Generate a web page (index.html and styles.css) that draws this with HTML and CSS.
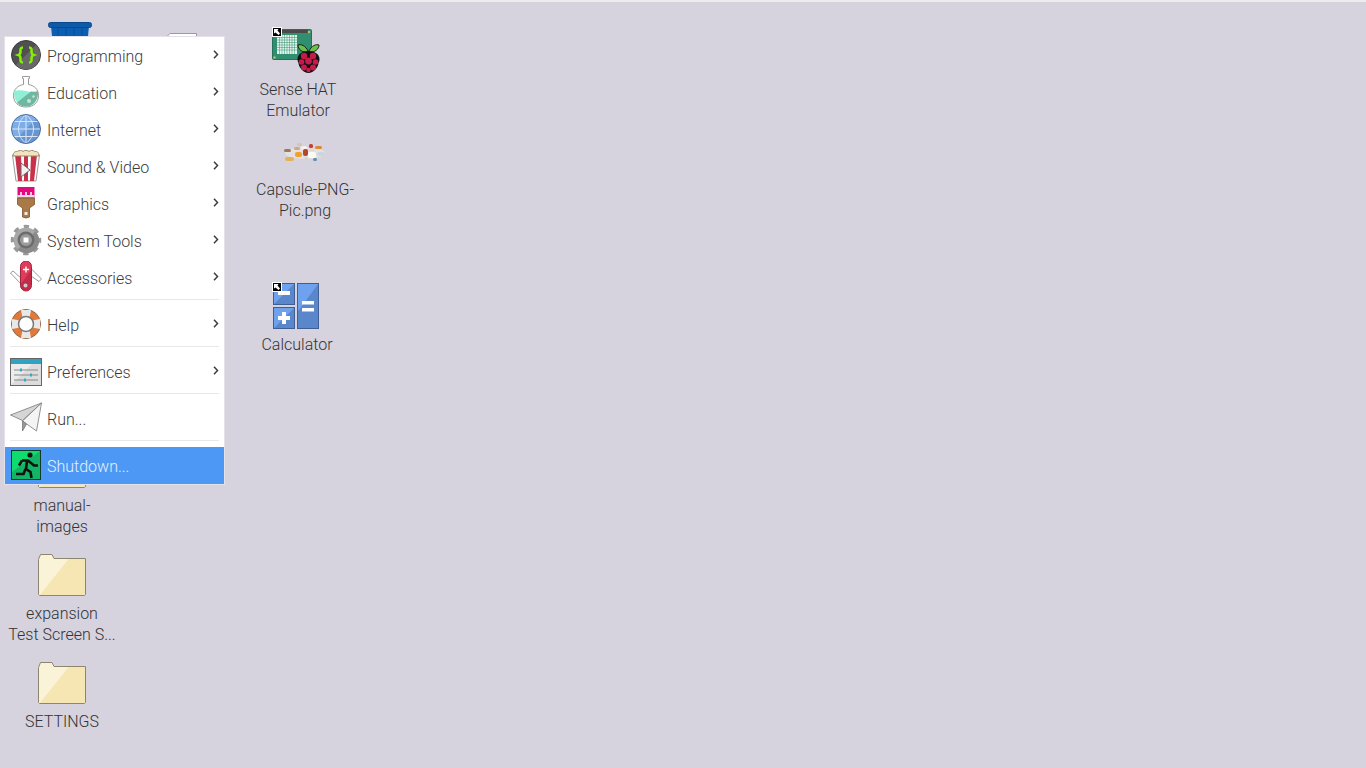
FILE: index.html
```html
<!DOCTYPE html>
<html lang="en">
<head>
    <meta charset="UTF-8">
    <meta name="viewport" content="width=device-width, initial-scale=1.0">
    <title>Desktop</title>
    <link rel="stylesheet" href="styles.css">
</head>
<body>
    <svg class="defs" width="0" height="0">
        <defs>
            <symbol id="folder" viewBox="0 0 48 42">
                <path d="M.5 41V5.5L2.5.5H14l2 4h31.500V40l-1 1.500H1.500Z" fill="#f5e6b4"/>
                <path d="M.5 41V5.500L2.500.5H14l2 4h15L1.500 41.500Z" fill="#fbf3d8"/>
                <path d="M.5 40.500V5.500L2.500.5H14l2 4h31.500v36l-1 1H1.500Z" fill="none" stroke="#8c8570"/>
            </symbol>
            <symbol id="shortcut" viewBox="0 0 10 10">
                <rect width="10" height="10" fill="#fff"/>
                <rect x="1" y="1" width="8" height="8" fill="#000"/>
                <path d="M2 2H6.500L5.500 3.500 8 6.500 6.500 8 3.500 5.500 2 6.500Z" fill="#fff"/>
            </symbol>
            <symbol id="chevron" viewBox="0 0 6 9">
                <path d="M1 .8 4.500 4.500 1 8.200" fill="none" stroke="#3c3c3c" stroke-width="1.500"/>
            </symbol>
        </defs>
    </svg>

    <div class="top-strip"></div>

    <main class="desktop">
        <!-- things half hidden behind the menu -->
        <svg class="desk-glyph trash" width="44" height="24" viewBox="0 0 44 24">
            <path d="M3 4h38l-2 20H5Z" fill="#0a5fb4"/>
            <path d="M10 6v18M18 6v18M26 6v18M34 6v18" stroke="#0b4f96"/>
            <rect x=".5" y=".5" width="43" height="5" rx="2" fill="#0f5aa6" stroke="#0a4a8c"/>
        </svg>
        <svg class="desk-glyph file" width="30" height="12" viewBox="0 0 30 12">
            <path d="M.5 12V3L3 .5h26.500V12" fill="#fff" stroke="#9a9a9a"/>
        </svg>
        <svg class="desk-glyph manual-folder" width="48" height="42"><use href="#folder"/></svg>

        <div class="desk-item manual-label"><span>manual-<br>images</span></div>

        <div class="desk-item sense">
            <svg class="desk-art" width="62" height="50" viewBox="0 0 62 50">
                <rect x="12.500" y="3.500" width="39" height="30" rx="1" fill="#2f8f6f" stroke="#25705a"/>
                <rect x="22" y="4" width="26" height="3" fill="#4a4a4a"/>
                <rect x="17" y="9" width="20" height="19" fill="#e4f3ec"/>
                <path d="M19.500 9v19M22 9v19M24.500 9v19M27 9v19M29.500 9v19M32 9v19M34.500 9v19M17 11.500h20M17 14h20M17 16.500h20M17 19h20M17 21.500h20M17 24h20" stroke="#2f8f6f" stroke-width=".5"/>
                <circle cx="14.500" cy="31.500" r="1.300" fill="#c9b36a"/>
                <circle cx="49" cy="6" r="1.300" fill="#c9b36a"/>
                <path d="M48.500 26c-3-7-8-8-10.500-7 0 4 4 8 10.500 7 6.500 1 10.500-3 10.500-7-2.500-1-7.500 0-10.500 7Z" fill="#6cc04a" stroke="#111" stroke-width=".9"/>
                <path d="M48.500 25c-6 0-11 3-11 8 0 2 .5 3 1 4 0 4 5 10 10 10s10-6 10-10c.5-1 1-2 1-4 0-5-5-8-11-8Z" fill="#111"/>
                <g fill="#c51a4a">
                    <circle cx="44" cy="30" r="3.200"/>
                    <circle cx="53" cy="30" r="3.200"/>
                    <circle cx="48.500" cy="35" r="3.400"/>
                    <circle cx="41.500" cy="36" r="2.800"/>
                    <circle cx="55.500" cy="36" r="2.800"/>
                    <circle cx="44" cy="41.500" r="3"/>
                    <circle cx="53" cy="41.500" r="3"/>
                    <circle cx="48.500" cy="44" r="2.200"/>
                </g>
                <use href="#shortcut" x="12" y="1" width="10" height="10"/>
            </svg>
            <span>Sense HAT<br>Emulator</span>
        </div>

        <div class="desk-item capsule">
            <svg class="desk-art" width="44" height="20" viewBox="0 0 44 20">
                <ellipse cx="22" cy="11" rx="20" ry="6" fill="#ebe6e2" opacity=".7"/>
                <rect x="1" y="7" width="7" height="3" rx="1.500" fill="#a0775a"/>
                <rect x="2" y="15" width="9" height="4" rx="2" fill="#e2b45a"/>
                <rect x="14" y="1" width="5" height="3" rx="1.500" fill="#d8c5a8"/>
                <rect x="11" y="5" width="6" height="3" rx="1.500" fill="#c9a98a"/>
                <rect x="12" y="10" width="7" height="5" rx="2" fill="#f0a030"/>
                <rect x="18" y="4" width="6" height="4" rx="2" fill="#f5f1ea"/>
                <rect x="20" y="7" width="5" height="7" rx="2" fill="#b5452e"/>
                <rect x="25" y="10" width="8" height="6" rx="2" fill="#fbfbf6"/>
                <rect x="26" y="2" width="4" height="4" rx="1.500" fill="#c33f33"/>
                <rect x="26" y="6" width="6" height="3" rx="1.500" fill="#e8d6c8"/>
                <rect x="32" y="4" width="7" height="3" rx="1.500" fill="#d9893b"/>
                <rect x="34" y="10" width="8" height="4" rx="2" fill="#c8d8d8"/>
                <rect x="30" y="16" width="4" height="3" rx="1.500" fill="#5d8fb0"/>
                <rect x="21" y="15" width="4" height="3" rx="1.500" fill="#d3d6d0"/>
            </svg>
            <span>Capsule-PNG-<br>Pic.png</span>
        </div>

        <div class="desk-item calc">
            <svg class="desk-art" width="48" height="48" viewBox="0 0 48 48">
                <rect x="1.500" y="1.500" width="21" height="21" fill="#5a86cc"/>
                <path d="M1.500 22.500v-21h21Z" fill="#6fa2ee"/>
                <rect x="1.500" y="1.500" width="21" height="21" fill="none" stroke="#3f5f94"/>
                <rect x="1.500" y="25.500" width="21" height="21" fill="#5a86cc"/>
                <path d="M1.500 46.500v-21h21Z" fill="#6fa2ee"/>
                <rect x="1.500" y="25.500" width="21" height="21" fill="none" stroke="#3f5f94"/>
                <rect x="25.500" y="1.500" width="21" height="45" fill="#5a86cc"/>
                <path d="M25.500 30V1.500h21Z" fill="#6fa2ee"/>
                <rect x="25.500" y="1.500" width="21" height="45" fill="none" stroke="#3f5f94"/>
                <rect x="6" y="9" width="12" height="4" fill="#fff"/>
                <rect x="6" y="34" width="12" height="4" fill="#fff"/>
                <rect x="10" y="30" width="4" height="12" fill="#fff"/>
                <rect x="30" y="19" width="12" height="3.500" fill="#fff"/>
                <rect x="30" y="26" width="12" height="3.500" fill="#fff"/>
                <use href="#shortcut" x="0" y="0" width="10" height="10"/>
            </svg>
            <span>Calculator</span>
        </div>

        <div class="desk-item expansion">
            <svg class="desk-art" width="48" height="42"><use href="#folder"/></svg>
            <span>expansion<br>Test Screen S...</span>
        </div>

        <div class="desk-item settings">
            <svg class="desk-art" width="48" height="42"><use href="#folder"/></svg>
            <span>SETTINGS</span>
        </div>
    </main>

    <nav class="menu">
        <div class="menu-item">
            <svg class="menu-icon" viewBox="0 0 32 32">
                <circle cx="16" cy="16" r="14.500" fill="#505050" stroke="#3a3a3a"/>
                <path d="M6 26 26 6A14.500 14.500 0 0 1 16 30.500 14 14 0 0 1 6 26Z" fill="#686868"/>
                <path d="M13 8.500c-3 0-2.500 2-2.500 4 0 2-.5 3-2 3.500 1.500.5 2 1.500 2 3.500s-.5 4 2.500 4M19 8.500c3 0 2.500 2 2.500 4 0 2 .5 3 2 3.500-1.500.5-2 1.500-2 3.500s.5 4-2.500 4" fill="none" stroke="#84f000" stroke-width="2.500"/>
            </svg>
            <span class="menu-label">Programming</span>
            <svg class="chevron"><use href="#chevron"/></svg>
        </div>
        <div class="menu-item">
            <svg class="menu-icon" viewBox="0 0 32 32">
                <path d="M12.500 .5h7v2h-1v6c6 1 10 5 10 11 0 7-5 11.500-12.500 11.500S3.500 26.500 3.500 19.500c0-6 4-10 10-11v-6h-1Z" fill="#fff" stroke="#9a9a9a"/>
                <path d="M4 15c8-3 16 3 24 0 .8 8-4 15.500-12 15.500S3.200 23 4 15Z" fill="#8ff0d6"/>
                <path d="M28 15c.8 8-4 15.500-12 15.500-4 0-7-1.500-9-4L21 15.500c2.500.5 5 .5 7-.5Z" fill="#6fb7a0"/>
                <circle cx="19" cy="25" r="2" fill="#bfe6da"/>
                <circle cx="23.500" cy="20.500" r="1.300" fill="#bfe6da"/>
            </svg>
            <span class="menu-label">Education</span>
            <svg class="chevron"><use href="#chevron"/></svg>
        </div>
        <div class="menu-item">
            <svg class="menu-icon" viewBox="0 0 32 32">
                <circle cx="16" cy="16" r="14.500" fill="#7eaeea"/>
                <path d="M6 26 26 6A14.500 14.500 0 0 1 16 30.500 14 14 0 0 1 6 26Z" fill="#6795d2"/>
                <path d="M1.500 16h29M16 1.500v29M4 8.500h24M4 23.500h24M16 1.500c-10 8-10 21 0 29M16 1.500c10 8 10 21 0 29" fill="none" stroke="#d7e6f7"/>
                <circle cx="16" cy="16" r="14.500" fill="none" stroke="#4e6f9c"/>
            </svg>
            <span class="menu-label">Internet</span>
            <svg class="chevron"><use href="#chevron"/></svg>
        </div>
        <div class="menu-item">
            <svg class="menu-icon" viewBox="0 0 32 32">
                <path d="M2.500 5 6 31h20L29.500 5Z" fill="#fff" stroke="#9a9a9a"/>
                <path d="M5 5 8 31h4L11 5ZM14 5 14 31h4V5ZM21 5 20 31h4L27 5Z" fill="#c9304a"/>
                <path d="M3 6c0-4 3-5 4.500-4.500C9 0 12 0 13 1.500 14.500 0 17.500 0 19 1.500 20.500 0 23 0 24.500 1.500 26.500 1 29 2 29 6Z" fill="#f3e3c0" stroke="#9a8a66"/>
                <path d="M11 13v14l9-7Z" fill="#f2f2f2" stroke="#666"/>
            </svg>
            <span class="menu-label">Sound &amp; Video</span>
            <svg class="chevron"><use href="#chevron"/></svg>
        </div>
        <div class="menu-item">
            <svg class="menu-icon" viewBox="0 0 32 32">
                <rect x="7.500" y="0" width="17" height="11" fill="#e5097f"/>
                <path d="M11 8V5M16 8V5M21 8V5" stroke="#fff" stroke-width="1.500"/>
                <rect x="7.500" y="8" width="17" height="2.500" fill="#f3d9e5"/>
                <path d="M7.500 11h17v6.500l-5 3.500v9q-3.500 2-7 0v-9l-5-3.500Z" fill="#a97a48" stroke="#7a5630" stroke-width=".8"/>
                <rect x="14.500" y="25" width="3" height="3" fill="#eee"/>
            </svg>
            <span class="menu-label">Graphics</span>
            <svg class="chevron"><use href="#chevron"/></svg>
        </div>
        <div class="menu-item">
            <svg class="menu-icon" viewBox="0 0 32 32">
                <circle cx="16" cy="16" r="13" fill="none" stroke="#999" stroke-width="4.500" stroke-dasharray="5.100 5.110" stroke-dashoffset="2.550"/>
                <circle cx="16" cy="16" r="12.500" fill="#a8a8a8"/>
                <path d="M7.500 25.500 25.500 7.500A12.500 12.500 0 0 1 7.500 25.500Z" fill="#8a8a8a"/>
                <circle cx="16" cy="16" r="8.500" fill="#6c6c6c"/>
                <circle cx="16" cy="16" r="6" fill="#9b9b9b"/>
                <rect x="13.500" y="13.500" width="5" height="5" fill="#fff"/>
            </svg>
            <span class="menu-label">System Tools</span>
            <svg class="chevron"><use href="#chevron"/></svg>
        </div>
        <div class="menu-item">
            <svg class="menu-icon" viewBox="0 0 32 32">
                <path d="M.5 12 3 10l9 8v6ZM31.500 18 21 7.500V15l8 5.500Z" fill="#fff" stroke="#999"/>
                <rect x="10.500" y="0" width="11" height="30" rx="5.500" fill="#e03c5a" stroke="#9a2440"/>
                <path d="M21 9v16a5 5 0 0 1-5 5 5 5 0 0 1-5-5v-2Z" fill="#c42b48"/>
                <path d="M16 5.500v6M13 8.500h6" stroke="#fff" stroke-width="1.400"/>
                <circle cx="15.500" cy="24.500" r="2" fill="#ccc"/>
            </svg>
            <span class="menu-label">Accessories</span>
            <svg class="chevron"><use href="#chevron"/></svg>
        </div>

        <div class="menu-sep"></div>

        <div class="menu-item">
            <svg class="menu-icon" viewBox="0 0 32 32">
                <circle cx="16" cy="16" r="14.500" fill="#e07a3a" stroke="#8a6a50"/>
                <path d="M11 2h10l-1.500 8h-7ZM11 30h10l-1.500-8h-7ZM2 11v10l8-1.500v-7ZM30 11v10l-8-1.500v-7Z" fill="#e8e8e8"/>
                <circle cx="16" cy="16" r="7.500" fill="#fff" stroke="#777" stroke-width="1.500"/>
            </svg>
            <span class="menu-label">Help</span>
            <svg class="chevron"><use href="#chevron"/></svg>
        </div>

        <div class="menu-sep"></div>

        <div class="menu-item">
            <svg class="menu-icon" viewBox="0 0 32 32">
                <rect x=".5" y="3.500" width="31" height="27" fill="#ececec" stroke="#666"/>
                <path d="M1 30 22 9H31V30Z" fill="#dcdcdc"/>
                <rect x="1" y="4" width="30" height="5" fill="#2fa3c0"/>
                <path d="M4 15h24M4 20h24M4 25h24" stroke="#888"/>
                <path d="M10 13.500h2v3h-2ZM20 18.500h2v3h-2ZM14 23.500h2v3h-2Z" fill="#35aac8"/>
            </svg>
            <span class="menu-label">Preferences</span>
            <svg class="chevron"><use href="#chevron"/></svg>
        </div>

        <div class="menu-sep"></div>

        <div class="menu-item">
            <svg class="menu-icon" viewBox="0 0 32 32">
                <path d="M31.500 1 .5 13l12 5.500Z" fill="#d5d5d5" stroke="#777" stroke-width=".8"/>
                <path d="M31.500 1 12.500 19l14 10Z" fill="#f4f4f4" stroke="#777" stroke-width=".8"/>
                <path d="M12.500 19v10l4-7Z" fill="#999" stroke="#777" stroke-width=".8"/>
            </svg>
            <span class="menu-label">Run...</span>
        </div>

        <div class="menu-sep"></div>

        <div class="menu-item active">
            <svg class="menu-icon" viewBox="0 0 32 32">
                <rect x="1.500" y="1.500" width="29" height="29" fill="#0fdc6e" stroke="#0b3d26"/>
                <path d="M2 30v-7L30 2v28Z" fill="#12b566"/>
                <circle cx="20" cy="6" r="2.600" fill="#111"/>
                <path d="M12 11.500h6l6 5h4M17 12l-1 8 4.500 3 1 6M15.500 20l-2 5H6M12 11.500l-3 5" fill="none" stroke="#111" stroke-width="2.600"/>
            </svg>
            <span class="menu-label">Shutdown...</span>
        </div>
    </nav>
</body>
</html>
```

FILE: styles.css
```css
body {
    margin: 0;
    height: 768px;
    overflow: hidden;
    background-color: #d6d2de;
    font-family: Roboto, "Liberation Sans", sans-serif;
    font-size: 16px;
    font-weight: 300;
    color: #333;
    position: relative;
}
.defs {
    position: absolute;
}
.top-strip {
    height: 2px;
    background-color: #ececec;
}

/* desktop icons sit at free positions */
.desktop {
    position: absolute;
    inset: 0;
}
.desk-glyph {
    position: absolute;
    display: block;
}
.trash { left: 48px; top: 22px; }
.file { left: 167px; top: 33px; }
.manual-folder { left: 38px; top: 446px; }

.desk-item {
    position: absolute;
    width: 120px;
    display: flex;
    flex-direction: column;
    align-items: center;
    text-align: center;
    line-height: 21px;
}
.desk-art {
    display: block;
    overflow: visible;
}
.manual-label { left: 2px; top: 495px; }
.sense { left: 238px; top: 26px; }
.sense .desk-art { margin: 0 0 3px -14px; }
.capsule { left: 245px; top: 142px; }
.capsule .desk-art { margin-bottom: 17px; }
.calc { left: 237px; top: 282px; }
.calc .desk-art { margin: 0 0 4px -2px; }
.expansion { left: 2px; top: 554px; }
.expansion .desk-art { margin-bottom: 7px; }
.settings { left: 2px; top: 662px; }
.settings .desk-art { margin-bottom: 7px; }

/* start menu */
.menu {
    position: absolute;
    left: 4px;
    top: 36px;
    width: 219px;
    background-color: #fff;
    border: 1px solid #e4e2e8;
}
.menu-item {
    height: 37px;
    display: flex;
    align-items: center;
    padding: 0 5px;
    color: #3c3c3c;
}
.menu-icon {
    width: 32px;
    height: 32px;
    flex: none;
    margin-top: -1px;
}
.menu-label {
    flex: 1;
    margin: 2px 0 0 5px;
}
.chevron {
    width: 6px;
    height: 9px;
    flex: none;
    margin-top: -2px;
}
.menu-sep {
    height: 1px;
    margin: 3px 5px 6px;
    background-color: #e8e8e8;
}
.active {
    background-color: #4d98f5;
    color: #e6f0fd;
}
```
